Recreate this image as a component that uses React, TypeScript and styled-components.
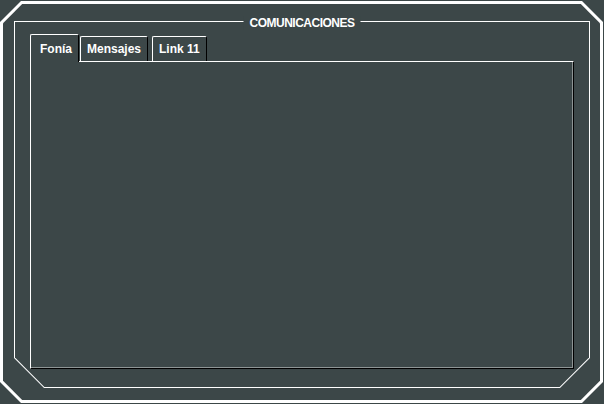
import styled, { createGlobalStyle } from "styled-components";

const BG = "#3c4748";

const GlobalStyle = createGlobalStyle`
  html, body {
    margin: 0;
    padding: 0;
    background: ${BG};
  }
  body {
    width: 604px;
    height: 404px;
    overflow: hidden;
    font-family: "Liberation Sans", Arial, sans-serif;
  }
`;

const octagon = (c: number) =>
  `polygon(${c}px 0, calc(100% - ${c}px) 0, 100% ${c}px, 100% calc(100% - ${c}px), calc(100% - ${c}px) 100%, ${c}px 100%, 0 calc(100% - ${c}px), 0 ${c}px)`;

const bottomCut = (c: number) =>
  `polygon(0 0, 100% 0, 100% calc(100% - ${c}px), calc(100% - ${c}px) 100%, ${c}px 100%, 0 calc(100% - ${c}px))`;

const tabs = ["Fonía", "Mensajes", "Link 11"];

export default function App() {
  return (
    <>
      <GlobalStyle />
      <Screen>
        <OuterRing>
          <OuterBody>
            <FieldSet>
              <Legend>COMUNICACIONES</Legend>
              <ThinRing>
                <ThinBody>
                  <TabRow>
                    {tabs.map((t, i) => (
                      <Tab key={t} $selected={i === 0}>
                        {t}
                      </Tab>
                    ))}
                  </TabRow>
                  <Panel />
                </ThinBody>
              </ThinRing>
            </FieldSet>
          </OuterBody>
        </OuterRing>
      </Screen>
    </>
  );
}

const Screen = styled.div`
  width: 604px;
  height: 404px;
  box-sizing: border-box;
  padding: 1px 1px 1px 0;
  display: flex;
`;

const OuterRing = styled.div`
  flex: 1;
  display: flex;
  padding: 3px;
  background: #fff;
  clip-path: ${octagon(21)};
`;

const OuterBody = styled.div`
  flex: 1;
  display: flex;
  background: ${BG};
  clip-path: ${octagon(19.2)};
  padding: 17px 10px 12px 11px;
`;

const FieldSet = styled.div`
  flex: 1;
  display: flex;
  position: relative;
`;

const Legend = styled.div`
  position: absolute;
  z-index: 2;
  top: -5px;
  left: 50%;
  transform: translateX(-50%);
  padding: 0 6px;
  background: ${BG};
  color: #fff;
  font-size: 12px;
  font-weight: bold;
  line-height: 14px;
  letter-spacing: -0.5px;
  white-space: nowrap;
`;

const ThinRing = styled.div`
  flex: 1;
  display: flex;
  padding: 1px;
  background: #fff;
  clip-path: ${bottomCut(30)};
`;

const ThinBody = styled.div`
  flex: 1;
  display: flex;
  flex-direction: column;
  background: ${BG};
  clip-path: ${bottomCut(29.4)};
  padding: 12px 15px 18px 15px;
`;

const TabRow = styled.div`
  display: flex;
  align-items: flex-end;
  height: 27px;
`;

const Tab = styled.div<{ $selected?: boolean }>`
  position: relative;
  z-index: 1;
  box-sizing: border-box;
  height: ${(p) => (p.$selected ? 28 : 25)}px;
  margin-bottom: ${(p) => (p.$selected ? -1 : 0)}px;
  margin-right: ${(p) => (p.$selected ? 1 : 4)}px;
  padding: ${(p) => (p.$selected ? "7px 6px 0 9px" : "5px 6px 0 6px")};
  background: ${BG};
  border-top: 1px solid #fff;
  border-left: 1px solid #fff;
  border-right: 1px solid #000;
  border-radius: 2px 2px 0 0;
  color: #fff;
  font-size: 12px;
  font-weight: bold;
  line-height: 14px;
  white-space: nowrap;
`;

const Panel = styled.div`
  flex: 1;
  background: ${BG};
  border-top: 1px solid #fff;
  border-left: 1px solid #fff;
  border-right: 1px solid #000;
  border-bottom: 1px solid #000;
  box-shadow: inset -1px -1px 0 #8e9595;
`;
